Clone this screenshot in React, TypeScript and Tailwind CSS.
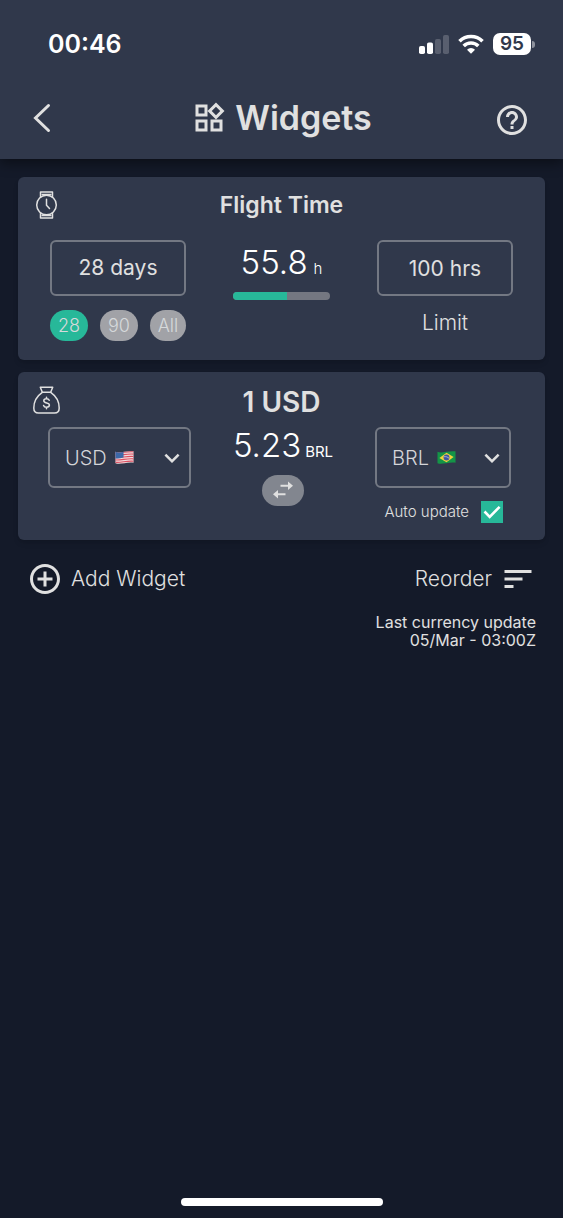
import React, { useState } from 'react';
import {
  MdAddCircleOutline,
  MdHelpOutline,
  MdKeyboardArrowDown,
  MdOutlineWidgets,
  MdSort,
} from 'react-icons/md';

const PERIODS = [
  { id: '28', label: '28', title: '28 days' },
  { id: '90', label: '90', title: '90 days' },
  { id: 'all', label: 'All', title: 'All time' },
];

const LIMIT_HOURS = 100;
const FLOWN_HOURS = 55.8;

const StatusBar: React.FC = () => (
  <div className="flex h-22 items-center justify-between pl-12 pr-7 text-white">
    <span className="text-[25px] leading-8 font-semibold">00:46</span>
    <div className="flex items-center gap-[9px]">
      {/* Cellular signal */}
      <svg width="30" height="20" viewBox="0 0 30 20" fill="currentColor" aria-hidden="true">
        <rect x="0" y="12" width="6" height="8" rx="1.8" />
        <rect x="8" y="8.5" width="6" height="11.5" rx="1.8" />
        <rect x="16" y="5" width="6" height="15" rx="1.8" opacity="0.2" />
        <rect x="24" y="1" width="6" height="19" rx="1.8" opacity="0.2" />
      </svg>
      {/* Wi-Fi */}
      <svg width="26" height="20" viewBox="0 0 26 20" aria-hidden="true">
        <g fill="none" stroke="currentColor" strokeWidth="3.6">
          <path d="M1.5 7.2a16.4 16.4 0 0 1 23 0" />
          <path d="M5.7 12a10.4 10.4 0 0 1 14.6 0" />
        </g>
        <path d="M13 19.8l-4-4.1a5.8 5.8 0 0 1 8 0z" fill="currentColor" />
      </svg>
      {/* Battery */}
      <div className="flex items-center gap-px">
        <span className="flex h-[22px] w-[38px] items-center justify-center rounded-[7px] bg-white text-[19px] leading-5 font-semibold text-[#30384b]">
          95
        </span>
        <span className="h-[7px] w-[3px] rounded-r-full bg-white/45" />
      </div>
    </div>
  </div>
);

const WatchIcon: React.FC = () => (
  <svg width="28" height="28" viewBox="0 0 28 28" fill="none" stroke="currentColor" strokeWidth="1.5" strokeLinejoin="round" aria-hidden="true">
    <circle cx="13.5" cy="14" r="9.8" />
    <path d="M7.500 6.300V.9h12v5.400M7.500 21.700v5.400h12v-5.400" />
    <path d="M8.500 3.600h10M8.500 24.400h10" />
    <path d="M13.500 8.300v6l3 3.200" strokeLinecap="round" />
  </svg>
);

const MoneyBagIcon: React.FC = () => (
  <svg width="28" height="28" viewBox="0 0 28 28" fill="none" stroke="currentColor" strokeWidth="1.5" strokeLinecap="round" strokeLinejoin="round" aria-hidden="true">
    <path d="M9.300 6.300L7.300 1.200h12.400l-2 5.100z" />
    <path d="M9.300 6.300C4.500 9.600.8 15.500.8 22c0 3.200 1.700 5 4.700 5h16c3 0 4.700-1.800 4.700-5 0-6.500-3.700-12.400-8.500-15.700" />
    <path d="M16.200 14.200c-.4-1-1.300-1.500-2.700-1.500-1.600 0-2.700.8-2.700 2.100 0 3 5.600 1.300 5.600 4.300 0 1.300-1.200 2.200-2.900 2.200-1.500 0-2.600-.7-2.900-1.800M13.500 11.300v1.400M13.500 21.300v1.400" />
  </svg>
);

const SwapIcon: React.FC = () => (
  <svg width="22" height="18" viewBox="0 0 22 18" fill="currentColor" aria-hidden="true">
    <path d="M16 0.500v3.300H8.500v2H16v3.300l5-4.300zM6 8.900v3.300h7.500v2H6v3.300l-5-4.300z" />
  </svg>
);

const UsFlag: React.FC = () => (
  <svg width="19" height="15" viewBox="0 0 20 15" aria-hidden="true">
    <clipPath id="us-wave">
      <path d="M.5 1.500C5 3.500 12 0 19.500 1v12C12 12 5 15.500.5 13.500z" />
    </clipPath>
    <g clipPath="url(#us-wave)">
      <rect width="20" height="15" fill="#f1dcdf" />
      <path d="M0 2.500c6 .8 13-2 20-1M0 5c6 .8 13-2 20-1M0 7.500c6 .8 13-2 20-1M0 10c6 .8 13-2 20-1M0 12.500c6 .8 13-2 20-1M0 15c6 .8 13-2 20-1" fill="none" stroke="#dc5062" strokeWidth="1.2" />
      <path d="M0 0h9v7.500C6 8.500 3 8.800 0 8.500z" fill="#3c68a8" />
    </g>
  </svg>
);

const BrFlag: React.FC = () => (
  <svg width="19" height="15" viewBox="0 0 20 15" aria-hidden="true">
    <path d="M.5 1.500C5 3.500 12 0 19.500 1v12C12 12 5 15.500.5 13.500z" fill="#149447" />
    <path d="M2.500 8L10 2.600l7.500 4.300L10 12.400z" fill="#f0d13c" />
    <circle cx="10" cy="7.500" r="3.1" fill="#3f559f" />
    <path d="M7.200 6.700c2-.4 4 .2 5.600 1.700" fill="none" stroke="#d5dcea" strokeWidth=".7" />
  </svg>
);

// Flags sit right after the currency code, so the offset depends on its width
const FLAGS: Record<string, { icon: React.ReactNode; position: string }> = {
  USD: { icon: <UsFlag />, position: 'left-[67px]' },
  BRL: { icon: <BrFlag />, position: 'left-[62px]' },
};

interface CurrencySelectProps {
  label: string;
  value: string;
  onChange: (value: string) => void;
}

const CurrencySelect: React.FC<CurrencySelectProps> = ({ label, value, onChange }) => (
  <div className="relative">
    <select
      aria-label={label}
      value={value}
      onChange={(e) => onChange(e.target.value)}
      className="block h-[61px] w-full appearance-none rounded-md border-2 border-[#737883] bg-transparent px-[15px] text-xl font-light text-[#d4d5d9] outline-none"
    >
      <option value="USD">USD</option>
      <option value="BRL">BRL</option>
    </select>
    <span className={`pointer-events-none absolute inset-y-0 flex items-center ${FLAGS[value].position}`}>
      {FLAGS[value].icon}
    </span>
    <MdKeyboardArrowDown className="pointer-events-none absolute right-1 top-4 size-[30px]" />
  </div>
);

interface WidgetCardProps {
  icon: React.ReactNode;
  title: string;
  titleClass: string;
  children: React.ReactNode;
}

const WidgetCard: React.FC<WidgetCardProps> = ({ icon, title, titleClass, children }) => (
  <section className="rounded-md bg-[#30384b] pt-3.5 pb-[17px] shadow-md">
    <div className="grid h-7 grid-cols-[28px_1fr_28px] items-center px-[15px]">
      {icon}
      <h2 className={titleClass}>{title}</h2>
    </div>
    {children}
  </section>
);

const FlightTimeWidget: React.FC = () => {
  const [period, setPeriod] = useState('28');
  const [limit, setLimit] = useState(`${LIMIT_HOURS} hrs`);
  const active = PERIODS.find((p) => p.id === period) ?? PERIODS[0];

  return (
    <WidgetCard icon={<WatchIcon />} title="Flight Time" titleClass="text-center text-[23px] leading-7 font-semibold">
      <div className="mt-[21px] grid grid-cols-[136px_1fr_136px] px-8 pb-0.5">
        <div>
          <button className="block h-14 w-full rounded-md border-2 border-[#737883] text-[21px]">{active.title}</button>
          <div className="mt-3.5 flex justify-between">
            {PERIODS.map((p) => (
              <button
                key={p.id}
                onClick={() => setPeriod(p.id)}
                aria-pressed={p.id === period}
                className={`h-[31px] w-[38px] rounded-full text-lg leading-none font-light text-[#d6d9db] last:w-9 ${
                  p.id === period ? 'bg-[#27b899]' : 'bg-[#a1a2a7]'
                }`}
              >
                {p.label}
              </button>
            ))}
          </div>
        </div>

        <div className="flex flex-col items-center pt-1 text-white">
          <p className="flex items-baseline gap-1.5">
            <span className="text-[33px] leading-9 font-light">{FLOWN_HOURS}</span>
            <span className="text-[15px] font-light">h</span>
          </p>
          <div className="mt-[11px] h-2 w-[97px] overflow-hidden rounded-full bg-[#747781]">
            <div className="h-full bg-[#27b899]" style={{ width: `${(FLOWN_HOURS / LIMIT_HOURS) * 100}%` }} />
          </div>
        </div>

        <div className="text-center">
          <input
            id="limit"
            value={limit}
            onChange={(e) => setLimit(e.target.value)}
            className="block h-14 w-full rounded-md border-2 border-[#737883] bg-transparent px-2 text-center text-[21px] outline-none"
          />
          <label htmlFor="limit" className="mt-[11px] block text-[21px] leading-8 font-light">
            Limit
          </label>
        </div>
      </div>
    </WidgetCard>
  );
};

const CurrencyWidget: React.FC = () => {
  const [from, setFrom] = useState('USD');
  const [to, setTo] = useState('BRL');
  const [autoUpdate, setAutoUpdate] = useState(true);

  const swap = () => {
    setFrom(to);
    setTo(from);
  };

  return (
    <WidgetCard icon={<MoneyBagIcon />} title={`1 ${from}`} titleClass="pt-1 text-center text-[28px] leading-6 font-semibold">
      <div className="mt-[13px] grid grid-cols-[143px_1fr_136px] items-start pl-[30px] pr-[34px]">
        <CurrencySelect label="From currency" value={from} onChange={setFrom} />

        <div className="flex flex-col items-center text-white">
          <p className="flex items-baseline gap-1">
            <span className="text-[33px] leading-9 font-light">5.23</span>
            <span className="text-[15px]">{to}</span>
          </p>
          <button
            onClick={swap}
            aria-label="Swap currencies"
            className="mt-[11px] flex h-[31px] w-[42px] items-center justify-center rounded-full bg-[#82868f] text-[#e0e0e0]"
          >
            <SwapIcon />
          </button>
        </div>

        <div>
          <CurrencySelect label="To currency" value={to} onChange={setTo} />
          <label className="mt-[13px] flex items-center justify-end gap-3 pr-2 text-[15px] leading-[22px] font-light whitespace-nowrap">
            Auto update
            <span className="relative size-[22px]">
              <input
                type="checkbox"
                checked={autoUpdate}
                onChange={(e) => setAutoUpdate(e.target.checked)}
                className="peer block size-full appearance-none border-2 border-[#27b899] checked:bg-[#27b899]"
              />
              <svg
                viewBox="0 0 22 22"
                fill="none"
                stroke="#ffffff"
                strokeWidth="2.6"
                className="pointer-events-none absolute inset-0 hidden peer-checked:block"
                aria-hidden="true"
              >
                <path d="M3.500 10.500l5.200 5.300L18.600 5.800" />
              </svg>
            </span>
          </label>
        </div>
      </div>
    </WidgetCard>
  );
};

const App: React.FC = () => {
  return (
    <div className="flex min-h-screen flex-col bg-[#141a29] font-['Inter','Liberation_Sans',sans-serif] text-[#e0e0e0]">
      <header className="bg-[#30384b] pb-3 shadow-[0_4px_12px_rgba(0,0,0,0.45)]">
        <StatusBar />
        <div className="grid h-[59px] grid-cols-[40px_1fr_40px] items-center px-[33px]">
          <button aria-label="Back">
            <svg width="18" height="30" viewBox="0 0 18 30" fill="none" stroke="currentColor" strokeWidth="3" strokeLinecap="round" aria-hidden="true">
              <path d="M15.500 2.500L2.500 15l13 12.500" />
            </svg>
          </button>
          <h1 className="flex items-center justify-center gap-2 text-[34px] leading-10 font-semibold">
            <MdOutlineWidgets className="size-9" />
            Widgets
          </h1>
          <button aria-label="Help" className="mt-1 justify-self-end">
            <MdHelpOutline className="size-9" />
          </button>
        </div>
      </header>

      <main className="flex flex-col gap-3 px-[18px] pt-[18px]">
        <FlightTimeWidget />
        <CurrencyWidget />

        <div className="flex items-center justify-between px-[9px] pt-[9px] text-[21px] font-light">
          <button className="flex items-center gap-2">
            <MdAddCircleOutline className="size-9" />
            Add Widget
          </button>
          <button className="flex items-center gap-2">
            Reorder
            <MdSort className="size-9" />
          </button>
        </div>

        <p className="pt-1 pr-[9px] text-right text-base leading-[18px]">
          Last currency update
          <br />
          05/Mar - 03:00Z
        </p>
      </main>

      <div className="mt-auto flex justify-center pb-3">
        <div className="h-2 w-[202px] rounded-full bg-white" />
      </div>
    </div>
  );
};

export default App;
